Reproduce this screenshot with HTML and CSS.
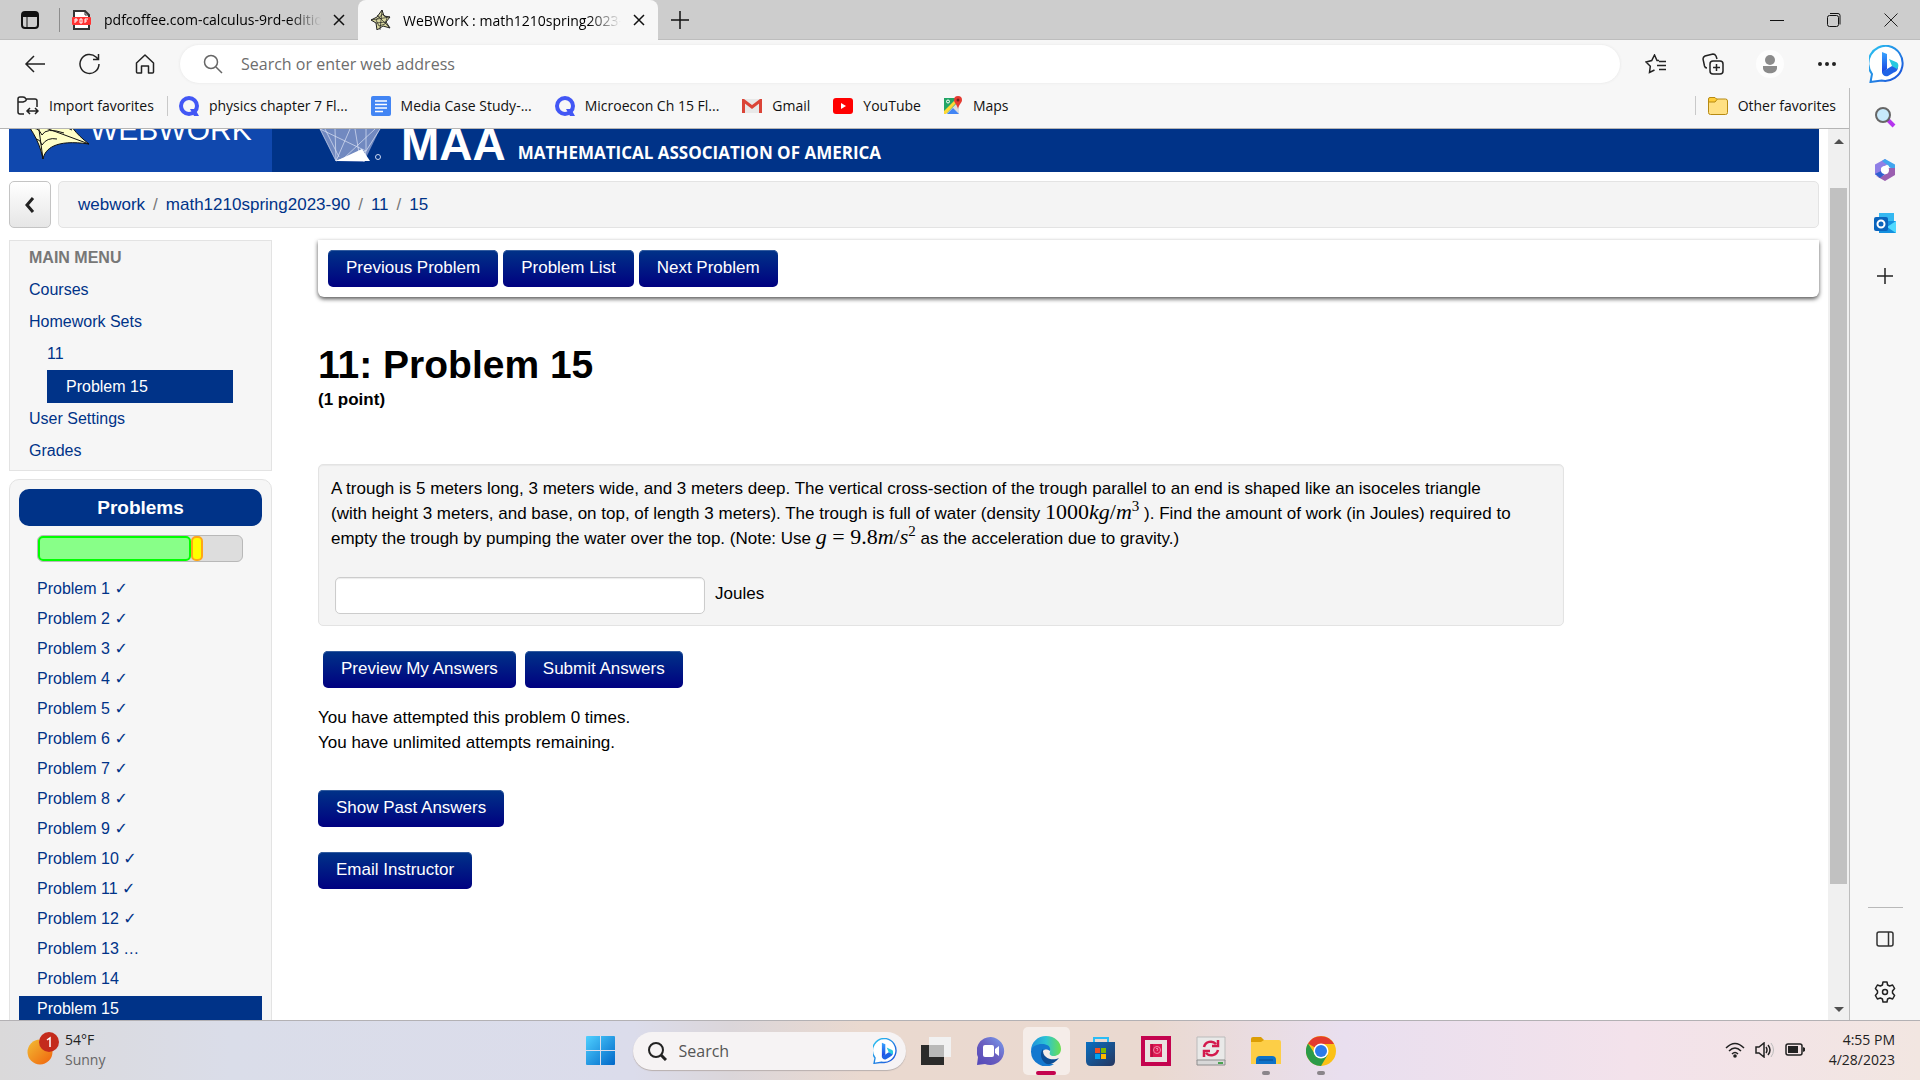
FILE: index.html
```html
<!DOCTYPE html>
<html lang="en">

	<head>
		<meta charset="UTF-8">
		<title>WeBWorK : math1210spring2023-90 : 11 : 15</title>
		<link rel="stylesheet" href="styles.css">
	</head>

	<body>
		<svg class="defs" aria-hidden="true">
			<defs>
				<linearGradient id="gBing" x1="0" y1="0" x2="1" y2="1">
					<stop offset="0" stop-color="#2bc8f2"/>
					<stop offset="1" stop-color="#1b48d8"/>
				</linearGradient>
				<linearGradient id="gB" x1="0" y1="0" x2="0" y2="1">
					<stop offset="0" stop-color="#37a5ff"/>
					<stop offset="1" stop-color="#1a3fe0"/>
				</linearGradient>
				<symbol id="bing" viewBox="0 0 38 38">
					<path d="M19.500 1a17.500 17.500 0 1 1-7 34.500L1.500 37 3 29A17.500 17.500 0 0 1 19.500 1z" fill="#fff" stroke="url(#gBing)" stroke-width="2"/>
					<path d="M13 7l5 2v15l-5 4z" fill="url(#gB)"/>
					<path d="M13 27l5-3 5-3 6 1c0 4-3 5-5 6l-5 3c-3 1-6-1-6-4z" fill="#1f63e6"/>
					<path d="M20 14l7 3c3 1 3 5 1 7l-5-3z" fill="#27c9e0"/>
				</symbol>
				<symbol id="quiz" viewBox="0 0 20 20">
					<circle cx="10" cy="10" r="8" fill="none" stroke="#4257f5" stroke-width="4"/>
					<path d="M11 13h5l4 7h-5z" fill="#4257f5"/>
				</symbol>
				<symbol id="web" viewBox="0 0 20 20">
					<path d="M11 0l2 6 6 1-4 5 4 6-7-2-6 4-1-7-5-3 6-3z" fill="#d9d8a0" stroke="#222" stroke-width="1"/>
					<path d="M11 0L9 20M0 10l19-3M5 13l10-1M19 18L6 5M12 4l4 4-2 6-6 2-3-6z" fill="none" stroke="#222" stroke-width=".7"/>
				</symbol>
			</defs>
		</svg>

		<header class="browser">
			<div class="tabs">
				<button class="tab-menu" aria-label="Tab actions">
					<svg width="18" height="18" viewBox="0 0 18 18"><rect x="1" y="1" width="16" height="16" rx="3" fill="none" stroke="#111" stroke-width="2"/><path d="M1 1h16v5H1z" fill="#111"/><path d="M6 6v11" stroke="#111"/></svg>
				</button>
				<div class="tab">
					<svg width="20" height="20" viewBox="0 0 20 20"><path d="M2 1h11l4 4v14H2z" fill="#fff" stroke="#333" stroke-width="2"/><path d="M13 1v4h4" fill="none" stroke="#333"/><rect y="7" width="19" height="8" rx="1" fill="#f33"/><path d="M3 13V9h2v2H3M8 9v4h2V9zM13 13V9h3M13 11h2" fill="none" stroke="#fff"/></svg>
					<span class="tab-title">pdfcoffee.com-calculus-9rd-edition</span>
					<button class="close" aria-label="Close tab"><svg width="12" height="12" viewBox="0 0 12 12"><path d="M1 1l10 10M11 1L1 11" stroke="#111" stroke-width="1.500"/></svg></button>
				</div>
				<div class="tab current">
					<svg width="20" height="20"><use href="#web"/></svg>
					<span class="tab-title">WeBWorK : math1210spring2023-90</span>
					<button class="close" aria-label="Close tab"><svg width="12" height="12" viewBox="0 0 12 12"><path d="M1 1l10 10M11 1L1 11" stroke="#111" stroke-width="1.500"/></svg></button>
				</div>
				<button class="new-tab" aria-label="New tab"><svg width="18" height="18" viewBox="0 0 18 18"><path d="M9 0v18M0 9h18" stroke="#111" stroke-width="1.500"/></svg></button>
				<div class="window-btns">
					<button aria-label="Minimize"><svg width="14" height="14" viewBox="0 0 14 14"><path d="M0 7.500h14" stroke="#111"/></svg></button>
					<button aria-label="Restore"><svg width="14" height="14" viewBox="0 0 14 14"><rect x=".5" y="2.500" width="11" height="11" rx="2" fill="none" stroke="#111"/><path d="M3 .5h8a2 2 0 0 1 2 2v9" fill="none" stroke="#111"/></svg></button>
					<button aria-label="Close"><svg width="14" height="14" viewBox="0 0 14 14"><path d="M.5.5l13 13M13.500.5l-13 13" stroke="#222"/></svg></button>
				</div>
			</div>

			<div class="toolbar">
				<button class="tool" aria-label="Back"><svg width="22" height="20" viewBox="0 0 22 20"><path d="M21 10H2M10 2l-8 8 8 8" fill="none" stroke="#222" stroke-width="1.500"/></svg></button>
				<button class="tool" aria-label="Refresh"><svg width="22" height="22" viewBox="0 0 22 22"><path d="M20 11a9.500 9.500 0 1 1-3-7l2 2M19.500 1v5.500H14" fill="none" stroke="#222" stroke-width="1.500"/></svg></button>
				<button class="tool" aria-label="Home"><svg width="20" height="20" viewBox="0 0 20 20"><path d="M1.500 9L10 1l8.500 8v9q0 1-1 1h-4v-7h-7v7h-4q-1 0-1-1z" fill="none" stroke="#222" stroke-width="1.500" stroke-linejoin="round"/></svg></button>
				<label class="address">
					<svg width="20" height="20" viewBox="0 0 20 20"><circle cx="8" cy="8" r="6.500" fill="none" stroke="#666" stroke-width="1.500"/><path d="M13 13l6 6" stroke="#666" stroke-width="1.500"/></svg>
					<input type="text" placeholder="Search or enter web address" aria-label="Search or enter web address">
				</label>
				<div class="tool-right">
					<button aria-label="Favorites"><svg width="22" height="20" viewBox="0 0 22 20"><path d="M14 6.500h-2L9.500 1 6.700 6.500 1 8l4.300 4.300-.8 6.200 5-2.500M14 7.500h7M12 11.500h9M14 15.500h7" fill="none" stroke="#222" stroke-width="1.500"/></svg></button>
					<button aria-label="Collections"><svg width="22" height="22" viewBox="0 0 22 22"><rect x="8" y="8" width="13" height="13" rx="3" fill="none" stroke="#222" stroke-width="1.500"/><path d="M14.500 11v7M11 14.500h7M5 15q-2 0-2.500-2L1 6q0-2 2-3l8-2q2 0 3 2l1 3" fill="none" stroke="#222" stroke-width="1.500"/></svg></button>
					<button aria-label="Profile"><svg width="28" height="28" viewBox="0 0 28 28"><circle cx="14" cy="14" r="14" fill="#fdfdfd"/><circle cx="14" cy="10" r="5" fill="#8b8b8b"/><path d="M7 16h14v2c0 7-14 7-14 0z" fill="#8b8b8b"/></svg></button>
					<button aria-label="Settings and more"><svg width="18" height="4" viewBox="0 0 18 4"><path d="M0 2a1.700 1.700 0 0 1 4 0 1.700 1.700 0 0 1-4 0M7 2a1.700 1.700 0 0 1 4 0 1.700 1.700 0 0 1-4 0M14 2a1.700 1.700 0 0 1 4 0 1.700 1.700 0 0 1-4 0" fill="#222"/></svg></button>
				</div>
				<button class="bing-btn" aria-label="Discover"><svg width="38" height="38"><use href="#bing"/></svg></button>
			</div>
		</header>

		<div class="window">
			<div class="view">
				<nav class="favorites">
					<a href="#" class="import"><svg width="22" height="20" viewBox="0 0 22 20"><path d="M7 18H3q-2 0-2-2V3q0-2 2-2h3q2 0 3 2t-3 3H1M9 3h9q2 0 2 2v6M11 15h9M13 12l-3 3 3 3M18 12l3 3-3 3" fill="none" stroke="#222" stroke-width="1.500"/></svg>Import favorites</a>
					<a href="#"><svg width="20" height="20"><use href="#quiz"/></svg>physics chapter 7 Fl...</a>
					<a href="#"><svg width="20" height="20" viewBox="0 0 20 20"><rect width="20" height="20" rx="2" fill="#4285f4"/><path d="M4 5h12M4 8.500h12M4 12h12M4 15.500h8" stroke="#fff" stroke-width="1.500"/></svg>Media Case Study-...</a>
					<a href="#"><svg width="20" height="20"><use href="#quiz"/></svg>Microecon Ch 15 Fl...</a>
					<a href="#"><svg width="20" height="14" viewBox="0 0 20 14"><path d="M0 0h20v14H0z" fill="#e8e8e8"/><path d="M1.500 14V1.500L10 8l8.500-6.500V14" fill="none" stroke="#db4437" stroke-width="3"/></svg>Gmail</a>
					<a href="#"><svg width="20" height="16" viewBox="0 0 20 16"><rect width="20" height="16" rx="3" fill="#f00"/><path d="M8 5l5 3-5 3z" fill="#fff"/></svg>YouTube</a>
					<a href="#"><svg width="19" height="19" viewBox="0 0 19 19"><path d="M0 2h15v15H0z" fill="#22a565"/><path d="M2 18L15 5v13z" fill="#ddd"/><path d="M0 15L12 3l2 2L2 18H0z" fill="#fdd835"/><path d="M3 18l6-6 6 6z" fill="#4285f4"/><path d="M14 0a4 4 0 0 1 4 4c0 3-3 4-4 9-1-5-4-6-4-9a4 4 0 0 1 4-4z" fill="#e53c32"/><circle cx="14" cy="4" r="1.500" fill="#7b231e"/><circle cx="4" cy="5.500" r="1.500" fill="none" stroke="#fff"/></svg>Maps</a>
					<a href="#" class="other"><svg width="20" height="18" viewBox="0 0 20 18"><rect x=".5" y="2" width="19" height="15.500" rx="2" fill="#ffe083" stroke="#b78a12"/><path d="M.5 5V2q0-1.500 1.500-1.500h5l2 2-2 2.500z" fill="#ffcd38" stroke="#b78a12"/></svg>Other favorites</a>
				</nav>

				<div class="frame">
					<div class="page">
						<div class="masthead">
							<div class="webwork-logo">
								<svg width="90" height="56" viewBox="0 0 90 56"><path d="M10 0C20 10 30 24 34 44 36 34 46 24 80 29 66 18 60 10 58 0z" fill="#ffffc8" stroke="#111"/><path d="M28 0l6 44M34 12l46 17M34 12L12 4M21 14q8-3 12 6 4-8 22-2M27 24q4 0 6 6 5-8 15-6M17 8q8-4 16 3 8-8 30 4" fill="none" stroke="#111"/></svg>
								<span>WEBWORK</span>
							</div>
							<div class="maa-logo">
								<svg width="74" height="44" viewBox="0 0 74 44"><path d="M5 0l16 32 28 1L65 0z" fill="#7189c0"/><path d="M5 0l46 22L65 0M5 0l16 32 30-10V0M51 22l-2 11M20 0l1 32L35 0M10 0l14 28M28 30L60 0M40 0l5 30" fill="none" stroke="#dce4f5" stroke-width=".7"/><path d="M21 32l26-12 8 12z" fill="#fff"/><circle cx="63" cy="28" r="2.500" fill="none" stroke="#ccd7ef"/></svg>
								<span class="maa">MAA</span>
								<span class="maa-name">MATHEMATICAL ASSOCIATION OF AMERICA</span>
							</div>
						</div>

						<div class="crumb-row">
							<button class="toggle" aria-label="Toggle menu"><svg width="10" height="16" viewBox="0 0 10 16"><path d="M8 1L2 8l6 7" fill="none" stroke="#222" stroke-width="3"/></svg></button>
							<nav class="breadcrumb">
								<a href="#">webwork</a><i>/</i><a href="#">math1210spring2023-90</a><i>/</i><a href="#">11</a><i>/</i><a href="#">15</a>
							</nav>
						</div>

						<div class="columns">
							<aside class="left">
								<nav class="menu">
									<h2>MAIN MENU</h2>
									<ul>
										<li><a href="#">Courses</a></li>
										<li><a href="#">Homework Sets</a>
											<ul>
												<li><a href="#">11</a>
													<ul>
														<li><a href="#" class="active">Problem 15</a></li>
													</ul>
												</li>
											</ul>
										</li>
										<li><a href="#">User Settings</a></li>
										<li><a href="#">Grades</a></li>
									</ul>
								</nav>
								<nav class="problems">
									<h2>Problems</h2>
									<div class="progress">
										<div class="done" style="width: 75%"></div>
										<div class="started" style="width: 6%"></div>
									</div>
									<ul>
										<li><a href="#">Problem 1 <b>✓</b></a></li>
										<li><a href="#">Problem 2 <b>✓</b></a></li>
										<li><a href="#">Problem 3 <b>✓</b></a></li>
										<li><a href="#">Problem 4 <b>✓</b></a></li>
										<li><a href="#">Problem 5 <b>✓</b></a></li>
										<li><a href="#">Problem 6 <b>✓</b></a></li>
										<li><a href="#">Problem 7 <b>✓</b></a></li>
										<li><a href="#">Problem 8 <b>✓</b></a></li>
										<li><a href="#">Problem 9 <b>✓</b></a></li>
										<li><a href="#">Problem 10 <b>✓</b></a></li>
										<li><a href="#">Problem 11 <b>✓</b></a></li>
										<li><a href="#">Problem 12 <b>✓</b></a></li>
										<li><a href="#">Problem 13 …</a></li>
										<li><a href="#">Problem 14</a></li>
										<li><a href="#" class="active">Problem 15</a></li>
									</ul>
								</nav>
							</aside>

							<main class="content">
								<div class="problem-nav">
									<button class="btn">Previous Problem</button>
									<button class="btn">Problem List</button>
									<button class="btn">Next Problem</button>
								</div>
								<h1>11: Problem 15</h1>
								<p class="points">(1 point)</p>
								<form class="answer-form">
									<div class="problem-text">
										<p>A trough is 5 meters long, 3 meters wide, and 3 meters deep. The vertical cross-section of the trough parallel to an end is shaped like an isoceles triangle<br>
										(with height 3 meters, and base, on top, of length 3 meters). The trough is full of water (density <span class="math">1000<i>kg</i>/<i>m</i><sup>3</sup></span> ). Find the amount of work (in Joules) required to<br>
										empty the trough by pumping the water over the top. (Note: Use <span class="math"><i>g</i> = 9.8<i>m</i>/<i>s</i><sup>2</sup></span> as the acceleration due to gravity.)</p>
										<div class="answer">
											<input type="text" id="answer1">
											<label for="answer1">Joules</label>
										</div>
									</div>
									<div class="submit-row">
										<button type="button" class="btn">Preview My Answers</button>
										<button type="button" class="btn">Submit Answers</button>
									</div>
								</form>
								<p class="attempts">You have attempted this problem 0 times.<br>You have unlimited attempts remaining.</p>
								<div class="more">
									<button class="btn">Show Past Answers</button>
									<button class="btn">Email Instructor</button>
								</div>
							</main>
						</div>
					</div>
					<div class="scrollbar">
						<svg width="10" height="5" viewBox="0 0 10 5"><path d="M0 5l5-5 5 5z" fill="#505050"/></svg>
						<div class="track"><div class="thumb"></div></div>
						<svg width="10" height="5" viewBox="0 0 10 5"><path d="M0 0l5 5 5-5z" fill="#505050"/></svg>
					</div>
				</div>
			</div>

			<aside class="edge-bar">
				<button aria-label="Search"><svg width="22" height="22" viewBox="0 0 22 22"><path d="M14 14l6 6" stroke="#b535ee" stroke-width="4"/><circle cx="9" cy="9" r="7" fill="#c8e9fb" stroke="#666" stroke-width="2"/></svg></button>
				<button aria-label="Microsoft 365"><svg width="22" height="22" viewBox="0 0 22 22"><path d="M11 0L1 5.500v10L7 19V9l9-5z" fill="#8f7fe6"/><path d="M8 2l3-2 10 5.500v6L15 8V7z" fill="#41a5ee"/><path d="M21 9v7l-10 6-9-5 4 1 8-4V9z" fill="#9b5fb0"/><path d="M1 15l6-3 4 3-5 4z" fill="#2f5fd0"/><circle cx="11" cy="11" r="4" fill="#fff"/></svg></button>
				<button aria-label="Outlook"><svg width="22" height="22" viewBox="0 0 22 22"><path d="M5 1h15v12H5z" fill="#35b8f1"/><path d="M5 9h17v12H5z" fill="#1490df"/><path d="M22 9v12l-9-6z" fill="#50d9ff"/><rect y="5" width="14" height="14" rx="2" fill="#0a64bd"/><circle cx="7" cy="12" r="3.500" fill="none" stroke="#fff" stroke-width="2"/></svg></button>
				<button aria-label="Customize"><svg width="16" height="16" viewBox="0 0 16 16"><path d="M8 0v16M0 8h16" stroke="#222" stroke-width="1.500"/></svg></button>
				<hr>
				<button aria-label="Hide sidebar"><svg width="18" height="16" viewBox="0 0 18 16"><rect x="1" y="1" width="16" height="14" rx="2" fill="none" stroke="#333" stroke-width="1.500"/><path d="M12.500 1v14" stroke="#333" stroke-width="1.500"/></svg></button>
				<button aria-label="Sidebar settings"><svg width="22" height="22" viewBox="0 0 22 22"><path d="M9 1h4l.6 3 2 1 3-1 2 3.500L18.500 10v2l2.100 2.500-2 3.500-3-1-2 1-.6 3H9l-.6-3-2-1-3 1-2-3.500L3.500 12v-2L1.400 7.500l2-3.500 3 1 2-1z" fill="none" stroke="#222" stroke-width="1.500" stroke-linejoin="round"/><circle cx="11" cy="11" r="2.500" fill="none" stroke="#222" stroke-width="1.500"/></svg></button>
			</aside>
		</div>

		<footer class="taskbar">
			<button class="weather">
				<svg width="34" height="36" viewBox="0 0 34 36"><defs><linearGradient id="gSun" x1="0" y1="0" x2="1" y2="1"><stop offset="0" stop-color="#f2bd34"/><stop offset="1" stop-color="#f0620c"/></linearGradient></defs><circle cx="14" cy="20" r="12.500" fill="url(#gSun)"/><circle cx="23" cy="10" r="10" fill="#c42b1c"/><path d="M21 8l3-2v9" fill="none" stroke="#fff" stroke-width="1.500"/></svg>
				<span>54°F<br><small>Sunny</small></span>
			</button>
			<div class="apps">
				<button class="app" aria-label="Start"><svg width="29" height="29" viewBox="0 0 29 29"><defs><linearGradient id="gWin" x1="0" y1="0" x2="1" y2="1"><stop offset="0" stop-color="#4fd0ff"/><stop offset="1" stop-color="#0067c8"/></linearGradient></defs><path d="M0 1q0-1 1-1h13v14H0zM15 0h13q1 0 1 1v13H15zM0 15h14v14H1q-1 0-1-1zM15 15h14v13q0 1-1 1H15z" fill="url(#gWin)"/></svg></button>
				<label class="task-search">
					<svg width="20" height="20" viewBox="0 0 20 20"><circle cx="9" cy="9" r="7" fill="none" stroke="#222" stroke-width="2"/><path d="M14 14l5 5" stroke="#222" stroke-width="3"/></svg>
					<input type="text" placeholder="Search" aria-label="Search">
					<svg width="26" height="26"><use href="#bing"/></svg>
				</label>
				<button class="app" aria-label="Task view"><svg width="30" height="28" viewBox="0 0 30 28"><path d="M0 8h23v20H0z" fill="#2b2b2a"/><path d="M8 0h22v20H8z" fill="#f1f1f1"/><path d="M8 8h15v12H8z" fill="#b9b9b8"/></svg></button>
				<button class="app" aria-label="Chat"><svg width="28" height="28" viewBox="0 0 28 28"><defs><linearGradient id="gChat" x1="1" y1="0" x2="0" y2="1"><stop offset="0" stop-color="#7aa0f0"/><stop offset=".5" stop-color="#6a5fc0"/><stop offset="1" stop-color="#5247b8"/></linearGradient></defs><path d="M14 0a14 14 0 1 1-6 27L0 28l1-8A14 14 0 0 1 14 0z" fill="url(#gChat)"/><rect x="6" y="8" width="11" height="12" rx="2" fill="#fff"/><path d="M18 12l4-3v10l-4-3z" fill="#fff"/></svg></button>
				<button class="app open" aria-label="Edge"><svg width="30" height="30" viewBox="0 0 30 30"><defs><linearGradient id="gE1" x1="0" y1="0" x2="1" y2="0"><stop offset="0" stop-color="#1f8fdc"/><stop offset=".5" stop-color="#2cc3d5"/><stop offset="1" stop-color="#6be04f"/></linearGradient></defs><path d="M0 15C0 6 7 0 15 0c9 0 15 6 15 13 0 5-4 7-7 7-4 0-5-2-4-4 1-4-2-6-6-6C7 9 1 12 0 15z" fill="url(#gE1)"/><path d="M0 15C1 10 6 8 11 8c6 0 9 3 8 7-6-4-9 1-8 5 1 6 7 8 12 8A15 15 0 0 1 0 15z" fill="#1478cf"/><path d="M12 13c-3 3-3 10 2 14 4 3 10 0 14-5-6 3-17 1-16-9z" fill="#0c4d94"/></svg></button>
				<button class="app" aria-label="Store"><svg width="30" height="30" viewBox="0 0 30 30"><defs><linearGradient id="gStore" x1="0" y1="0" x2="1" y2="1"><stop offset="0" stop-color="#0a6fc0"/><stop offset="1" stop-color="#26365f"/></linearGradient></defs><path d="M8 7V2h14v5" fill="none" stroke="#2bbcf5" stroke-width="2"/><path d="M0 6h29v19q0 5-5 5H5q-5 0-5-5z" fill="url(#gStore)"/><path d="M9 12h5v5H9z" fill="#f25022"/><path d="M15 12h5v5h-5z" fill="#7fba00"/><path d="M9 18h5v5H9z" fill="#00a4ef"/><path d="M15 18h5v5h-5z" fill="#ffb900"/></svg></button>
				<button class="app" aria-label="Help"><svg width="30" height="30" viewBox="0 0 30 30"><path d="M0 0h30v30H0z" fill="#c4044f"/><path d="M4 4h22v22H4z" fill="#e9e2e0"/><path d="M9 8h12v13H9z" fill="#dc1752"/><path d="M11 8v13" stroke="#8f0d38"/><circle cx="16" cy="14" r="3.500" fill="none" stroke="#f08ba9"/><path d="M15 13q1-2 2 0l-1 2" fill="none" stroke="#f08ba9"/></svg></button>
				<button class="app" aria-label="Backup"><svg width="30" height="30" viewBox="0 0 30 30"><path d="M1 1h28v24H1z" fill="#e9e9e8" stroke="#bbb"/><path d="M1 24h28v5H1z" fill="#d8d8d8" stroke="#8d8d8d"/><path d="M22 26h5v2h-5z" fill="#4aa350"/><path d="M8 11a7 7 0 0 1 12-3M22 4v6h-6M22 14a7 7 0 0 1-12 3M8 21v-6h6" fill="none" stroke="#d31a4d" stroke-width="2.500"/></svg></button>
				<button class="app running" aria-label="File Explorer"><svg width="30" height="28" viewBox="0 0 30 28"><path d="M0 2q0-2 2-2h8l3 3v5H0z" fill="#dc9e05"/><path d="M0 5h10l3-2h15q2 0 2 2v22H0z" fill="#fdce47"/><path d="M5 27v-4q0-4 4-4h12q4 0 4 4v4z" fill="#0d72c8"/><path d="M8 23h14" stroke="#0a4b8c"/></svg></button>
				<button class="app running" aria-label="Chrome"><svg width="30" height="30" viewBox="0 0 30 30"><circle cx="15" cy="15" r="15" fill="#fbc116"/><path d="M15 15L2 7.500A15 15 0 0 1 28 8H15z" fill="#e33b2e"/><path d="M2 7.500A15 15 0 0 0 15 30l6.500-11L15 15 9 18z" fill="#2b9b48"/><circle cx="15" cy="15" r="7.500" fill="#fff"/><circle cx="15" cy="15" r="6" fill="#2c7bea"/></svg></button>
			</div>
			<div class="tray">
				<svg width="20" height="16" viewBox="0 0 20 16"><path d="M1 6q9-9 18 0M4 9q6-6 12 0M7 12q3-3 6 0" fill="none" stroke="#222" stroke-width="1.500"/><circle cx="10" cy="14" r="1.800" fill="#222"/></svg>
				<svg width="20" height="16" viewBox="0 0 20 16"><path d="M1 5h3l5-4v14l-5-4H1zM11 5q2 3 0 6M13 3q4 5 0 10" fill="none" stroke="#222" stroke-width="1.500"/><path d="M16 1q5 7 0 14" fill="none" stroke="#bbb"/></svg>
				<svg width="20" height="14" viewBox="0 0 20 14"><rect x="1" y="1" width="16" height="11" rx="2" fill="none" stroke="#222" stroke-width="1.500"/><path d="M3 3h10v7H3zM18 4l2 1v3l-2 1z" fill="#222"/></svg>
				<time>4:55 PM<br>4/28/2023</time>
			</div>
		</footer>
	</body>

</html>
```

FILE: styles.css
```css
* {
	box-sizing: border-box;
}

body {
	margin: 0;
	height: 100vh;
	overflow: hidden;
	display: flex;
	flex-direction: column;
	background: #f7f7f7;
	color: #000;
	font-family: "Segoe UI", "Open Sans", sans-serif;
	font-size: 14px;
}

button {
	display: flex;
	align-items: center;
	justify-content: center;
	padding: 0;
	border: 0;
	background: none;
	font: inherit;
	color: inherit;
}

svg {
	flex: none;
}

a {
	color: #038;
	text-decoration: none;
}

ul {
	list-style: none;
	margin: 0;
	padding: 0;
}

h1, h2, p {
	margin: 0;
}

.defs {
	position: absolute;
	width: 0;
	height: 0;
}

/* tabs */
.tabs {
	display: flex;
	height: 40px;
	background: #cdcdcd;
	border-bottom: 1px solid #bdbdbd;
}

.tab-menu {
	width: 59px;
}

.tab {
	display: flex;
	align-items: center;
	width: 299px;
	padding: 0 13px;
	gap: 12px;
	background: linear-gradient(#8d8d8d, #8d8d8d) 0 50% / 1px 24px no-repeat;
}

.tab.current {
	width: 300px;
	height: 40px;
	background: #f7f7f7;
	border-radius: 8px 8px 0 0;
}

.tab-title {
	flex: 1;
	overflow: hidden;
	white-space: nowrap;
	-webkit-mask-image: linear-gradient(90deg, #000 85%, transparent);
	mask-image: linear-gradient(90deg, #000 85%, transparent);
}

.new-tab {
	width: 43px;
}

.window-btns {
	display: flex;
	margin-left: auto;
	padding-right: 1px;
}

.window-btns button {
	width: 57px;
}

/* toolbar */
.toolbar {
	display: flex;
	align-items: center;
	height: 48px;
	padding-left: 7px;
}

.tool {
	width: 55px;
}

.address {
	flex: 1;
	display: flex;
	align-items: center;
	gap: 18px;
	height: 38px;
	margin-left: 8px;
	padding: 0 23px;
	background: #fff;
	border-radius: 19px;
	box-shadow: 0 0 3px #e4e4e4;
}

.address input,
.task-search input {
	flex: 1;
	min-width: 0;
	padding: 0;
	border: 0;
	outline: 0;
	background: none;
	font: inherit;
	font-size: 16px;
}

.address input::placeholder {
	color: #6d6d6d;
}

.tool-right {
	display: flex;
	padding-left: 7px;
}

.tool-right button {
	width: 57px;
}

.bing-btn {
	width: 65px;
}

/* window body */
.window {
	flex: 1;
	min-height: 0;
	display: flex;
}

.view {
	flex: 1;
	min-width: 0;
	display: flex;
	flex-direction: column;
	border-right: 1px solid #bdbdbd;
}

.favorites {
	display: flex;
	align-items: center;
	gap: 23px;
	height: 41px;
	padding: 0 13px 5px 17px;
	border-bottom: 1px solid #b5b5b5;
}

.favorites a {
	display: flex;
	align-items: center;
	gap: 10px;
	color: #111;
	white-space: nowrap;
}

.favorites .import {
	padding-right: 13px;
	margin-right: -12px;
	border-right: 1px solid #c9c9c9;
}

.favorites .other {
	margin-left: auto;
	padding-left: 12px;
	border-left: 1px solid #c9c9c9;
}

.frame {
	flex: 1;
	min-height: 0;
	display: flex;
	background: #fff;
}

.scrollbar {
	display: flex;
	flex-direction: column;
	align-items: center;
	width: 21px;
	padding: 10px 2px 8px;
	background: #f0f0f0;
}

.track {
	flex: 1;
	width: 100%;
	padding: 44px 0 123px;
}

.thumb {
	height: 100%;
	background: #c1c1c1;
}

.edge-bar {
	display: flex;
	flex-direction: column;
	align-items: center;
	width: 70px;
	padding: 2px 0;
}

.edge-bar button {
	height: 53px;
	width: 48px;
}

.edge-bar hr {
	width: 35px;
	margin: auto 0 4px;
	border: 0;
	border-top: 1px solid #b9b9b9;
}

/* webwork page */
.page {
	flex: 1;
	min-width: 0;
	overflow: hidden;
	padding: 0 9px;
	font-family: Arial, "Liberation Sans", sans-serif;
	font-size: 17px;
	line-height: 25px;
}

.masthead {
	display: flex;
	height: 43px;
	background: #038;
	color: #fff;
	overflow: hidden;
}

.webwork-logo {
	display: flex;
	width: 263px;
	background: #1048ae;
	font-size: 30px;
	line-height: 1px;
}

.webwork-logo svg {
	margin: -14px -9px 0 0;
}

.maa-logo {
	display: flex;
	align-items: flex-start;
	padding-left: 43px;
	font-weight: bold;
}

.maa {
	padding: 0 12px 0 12px;
	font-size: 46px;
	line-height: 31px;
}

.maa-name {
	padding-top: 11px;
	font-family: "Liberation Sans Narrow", "Open Sans", sans-serif;
	font-size: 17px;
}

.crumb-row {
	display: flex;
	gap: 7px;
	margin: 9px 0 12px;
	height: 47px;
}

.toggle {
	width: 42px;
	border: 1px solid #c4c4c4;
	border-radius: 5px;
	background: linear-gradient(#fff, #e6e6e6);
}

.breadcrumb {
	flex: 1;
	padding: 10px 19px;
	border: 1px solid #e3e3e3;
	border-radius: 5px;
	background: #f4f4f4;
}

.breadcrumb i {
	padding: 0 8px;
	font-style: normal;
	color: #777;
}

.columns {
	display: flex;
	gap: 46px;
}

.left {
	width: 263px;
	font-size: 16px;
}

.menu {
	padding: 0 18px 3px 19px;
	border: 1px solid #e3e3e3;
	background: #f6f6f6;
	line-height: 32px;
}

.menu h2 {
	font-size: 16px;
	line-height: 33px;
	color: #777;
}

.menu a {
	display: block;
}

.menu ul ul {
	margin: 0 20px 0 18px;
}

.menu ul ul ul {
	margin: 0;
}

.active {
	background: #038;
	color: #fff;
}

.menu .active {
	padding-left: 19px;
	line-height: 33px;
}

.problems {
	margin-top: 8px;
	padding: 9px;
	border: 1px solid #e3e3e3;
	border-radius: 10px;
	background: #f6f6f6;
}

.problems h2 {
	border-radius: 10px;
	background: #038;
	color: #fff;
	font-size: 19px;
	line-height: 37px;
	text-align: center;
}

.progress {
	display: flex;
	height: 27px;
	margin: 9px 19px 14px 18px;
	border: 1px solid #b8b8b8;
	border-radius: 6px;
	background: #ddd;
}

.done,
.started {
	border: 2px solid #0f0;
	border-radius: 5px;
	background: #8f8;
}

.started {
	border-color: #ffa617;
	background: #ff0;
}

.problems ul {
	display: grid;
	gap: 5px;
}

.problems li a {
	display: block;
	padding-left: 18px;
}

.problems b {
	font-family: "DejaVu Sans", sans-serif;
	font-weight: normal;
	line-height: 1px;
}

.content {
	flex: 1;
	min-width: 0;
}

.btn {
	display: inline-flex;
	height: 37px;
	padding: 0 18px 3px;
	border-radius: 5px;
	background: linear-gradient(#038, #000080);
	box-shadow: inset 0 1px 0 #335c9f;
	color: #fff;
	font-size: 17px;
	white-space: nowrap;
}

.problem-nav {
	display: flex;
	gap: 5px;
	padding: 10px;
	border-radius: 0 0 6px 6px;
	box-shadow: 0 2px 4px #555;
}

h1 {
	margin-top: 45px;
	font-size: 39px;
	line-height: 45px;
}

.points {
	padding-bottom: 52px;
	font-weight: bold;
}

.problem-text {
	width: 83%;
	padding: 11px 12px;
	border: 1px solid #e3e3e3;
	border-radius: 5px;
	background: #f4f4f4;
	box-shadow: inset 0 1px 1px #e9e9e9;
}

.problem-text p {
	white-space: nowrap;
}

.math {
	font-family: "Liberation Serif", serif;
	font-size: 22px;
	line-height: 1px;
}

.math sup {
	font-size: 15px;
	line-height: 1px;
}

.answer {
	display: flex;
	gap: 10px;
	padding: 26px 4px 0;
}

.answer input {
	width: 370px;
	height: 37px;
	border: 1px solid #ccc;
	border-radius: 5px;
	box-shadow: inset 0 1px 1px #ececec;
	font: inherit;
}

.answer label {
	padding-top: 4px;
}

.submit-row {
	display: flex;
	gap: 9px;
	margin: 25px 5px 17px;
}

.more {
	display: flex;
	flex-direction: column;
	align-items: flex-start;
	gap: 25px;
	margin-top: 35px;
}

/* taskbar */
.taskbar {
	display: flex;
	justify-content: space-between;
	height: 60px;
	border-top: 1px solid #b3b1b4;
	background: linear-gradient(90deg, #dad9da, #dadde9 12%, #dbdceb 33%, #dbd6da 38%, #ead9cf 45%, #ead9d0 60%, #e9dfef 70%, #f3e2eb 85%, #f2e6e1);
	color: #222;
	line-height: 20px;
}

.weather,
.tray {
	flex: 1;
	display: flex;
	align-items: center;
}

.weather {
	justify-content: flex-start;
	gap: 5px;
	padding: 0 0 2px 26px;
	text-align: left;
}

.weather small {
	font-size: 14px;
	color: #666;
}

.apps {
	display: flex;
	align-items: center;
}

.app {
	position: relative;
	width: 47px;
	height: 48px;
	margin: 0 4px;
	border-radius: 5px;
}

.open {
	background: #f5ede9;
}

.open::after,
.running::after {
	content: "";
	position: absolute;
	left: 50%;
	bottom: 0;
	width: 20px;
	height: 4px;
	border-radius: 2px;
	background: #c4044f;
	transform: translateX(-50%);
}

.running::after {
	width: 8px;
	background: #8a858a;
}

.task-search {
	display: flex;
	align-items: center;
	gap: 12px;
	width: 273px;
	height: 38px;
	margin: 0 3px 0 5px;
	padding: 0 7px 0 14px;
	border-radius: 19px;
	background: #f6f3f4;
	box-shadow: 0 1px 1px #b9b0ae;
}

.task-search input::placeholder {
	color: #555;
}

.tray {
	justify-content: flex-end;
	gap: 10px;
	padding: 0 25px 2px 0;
}

.tray time {
	width: 80px;
	text-align: right;
}
```
